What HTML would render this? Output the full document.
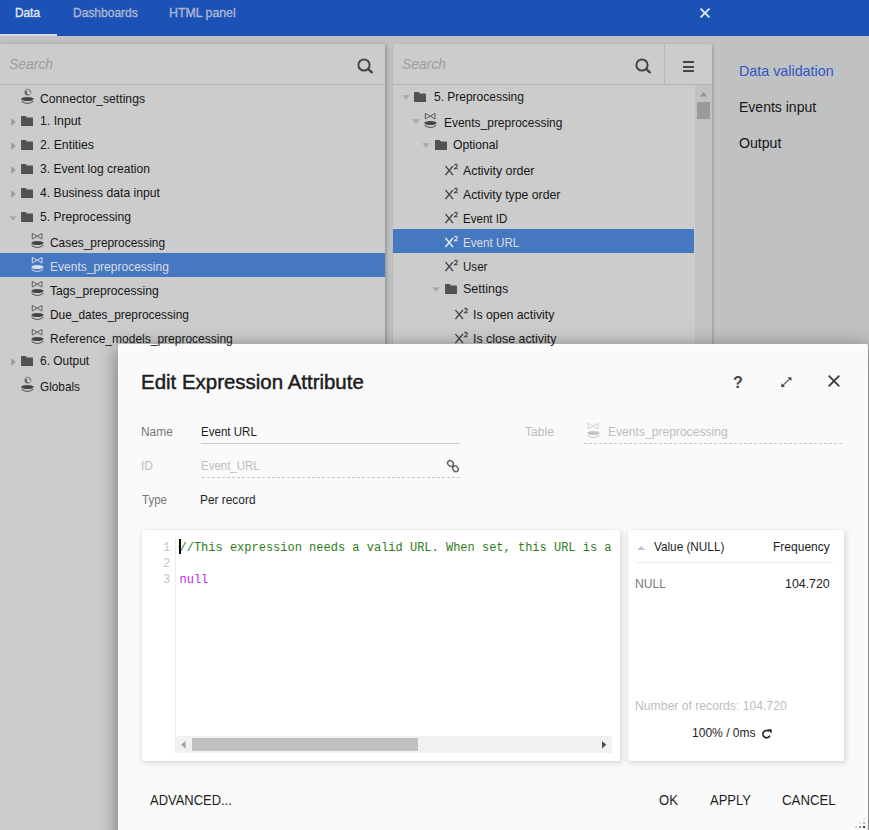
<!DOCTYPE html>
<html><head><meta charset="utf-8"><title>Edit Expression Attribute</title>
<style>
html,body{margin:0;padding:0;width:869px;height:830px;overflow:hidden;background:#c0c1c2}
#root{width:869px;height:830px;overflow:hidden;position:relative;background:#c0c1c2;font-family:'Liberation Sans', sans-serif;}
svg{overflow:visible;display:block}
</style></head>
<body>
<div id="root">
<div style="position:absolute;left:0;top:0;width:869px;height:36px;background:#1c51b6"></div>
<div style="position:absolute;left:0;top:34px;width:57px;height:2px;background:#d3d7df"></div>
<svg style="position:absolute;left:699px;top:7px;" width="12" height="12" viewBox="0 0 12 12"><path d="M1.6 1.6 L10.4 10.4 M10.4 1.6 L1.6 10.4" stroke="#dfe3ec" stroke-width="2" fill="none"/></svg>
<div style="position:absolute;left:0;top:44px;width:385px;height:786px;background:#cccccc;border-radius:2px 2px 0 0;box-shadow:1px 1px 4px rgba(0,0,0,.3)"></div>
<div style="position:absolute;left:0;top:84px;width:385px;height:1px;background:#b2b2b2"></div>
<svg style="position:absolute;left:356.2px;top:56.8px;" width="20" height="20" viewBox="0 0 20 20"><circle cx="8" cy="8" r="5.6" fill="none" stroke="#454545" stroke-width="2"/><path d="M12.3 12.1 L15.9 15.3" stroke="#454545" stroke-width="2.4" stroke-linecap="round"/></svg>
<div style="position:absolute;left:393px;top:44px;width:319px;height:786px;background:#cccccc;border-radius:2px 2px 0 0;box-shadow:1px 1px 3px rgba(0,0,0,.22)"></div>
<div style="position:absolute;left:393px;top:84px;width:319px;height:1px;background:#b2b2b2"></div>
<div style="position:absolute;left:664px;top:44px;width:1px;height:40px;background:#b6b6b6"></div>
<svg style="position:absolute;left:633.8px;top:56.7px;" width="20" height="20" viewBox="0 0 20 20"><circle cx="8" cy="8" r="5.6" fill="none" stroke="#454545" stroke-width="2"/><path d="M12.3 12.1 L15.9 15.3" stroke="#454545" stroke-width="2.4" stroke-linecap="round"/></svg>
<div style="position:absolute;left:682.5px;top:61px;width:11.5px;height:2px;background:#454545"></div>
<div style="position:absolute;left:682.5px;top:65.5px;width:11.5px;height:2px;background:#454545"></div>
<div style="position:absolute;left:682.5px;top:70px;width:11.5px;height:2px;background:#454545"></div>
<div style="position:absolute;left:695px;top:85px;width:17px;height:745px;background:#c2c2c2"></div>
<svg style="position:absolute;left:700px;top:91.5px;" width="7" height="4.5" viewBox="0 0 7 4.5"><path d="M0 4.5 L3.5 0 L7 4.5Z" fill="#929292"/></svg>
<div style="position:absolute;left:697px;top:102px;width:13px;height:17px;background:#9a9a9a"></div>
<div style="position:absolute;left:0;top:253px;width:385px;height:24px;background:#4677c1"></div>
<svg style="position:absolute;left:20.5px;top:89.2px;" width="13" height="15" viewBox="0 0 13 15"><circle cx="6.8" cy="3.2" r="3" fill="#dedede" stroke="#707070" stroke-width="0.9"/><path d="M4.3 2.2 Q5.6 1.4 6.6 2.4 L6.2 4.2 L7.6 5.9 Q5 6.6 4.1 4.4 Z" fill="#454545" opacity=".8"/><path d="M7.6 0.8 Q9.4 1.6 9.4 3.2 L8.2 2.9 Z" fill="#454545" opacity=".6"/><ellipse cx="6.4" cy="10" rx="6.2" ry="2" fill="#454545"/><path d="M0.4 12.2 Q6.4 16.6 12.4 12.2" fill="none" stroke="#454545" stroke-width="1"/></svg>
<svg style="position:absolute;left:10.8px;top:117.7px;" width="5" height="8" viewBox="0 0 5 8"><path d="M0.3 0.2 L4.6 4 L0.3 7.8Z" fill="#989898"/></svg>
<svg style="position:absolute;left:21.2px;top:116px;" width="12" height="10" viewBox="0 0 12 10"><path d="M0.6 0 H4.6 L6 1.5 H11.4 Q12 1.5 12 2.1 V9.4 Q12 10 11.4 10 H0.6 Q0 10 0 9.4 V0.6 Q0 0 0.6 0Z" fill="#525252"/></svg>
<svg style="position:absolute;left:10.8px;top:141.7px;" width="5" height="8" viewBox="0 0 5 8"><path d="M0.3 0.2 L4.6 4 L0.3 7.8Z" fill="#989898"/></svg>
<svg style="position:absolute;left:21.2px;top:140px;" width="12" height="10" viewBox="0 0 12 10"><path d="M0.6 0 H4.6 L6 1.5 H11.4 Q12 1.5 12 2.1 V9.4 Q12 10 11.4 10 H0.6 Q0 10 0 9.4 V0.6 Q0 0 0.6 0Z" fill="#525252"/></svg>
<svg style="position:absolute;left:10.8px;top:165.7px;" width="5" height="8" viewBox="0 0 5 8"><path d="M0.3 0.2 L4.6 4 L0.3 7.8Z" fill="#989898"/></svg>
<svg style="position:absolute;left:21.2px;top:164px;" width="12" height="10" viewBox="0 0 12 10"><path d="M0.6 0 H4.6 L6 1.5 H11.4 Q12 1.5 12 2.1 V9.4 Q12 10 11.4 10 H0.6 Q0 10 0 9.4 V0.6 Q0 0 0.6 0Z" fill="#525252"/></svg>
<svg style="position:absolute;left:10.8px;top:189.7px;" width="5" height="8" viewBox="0 0 5 8"><path d="M0.3 0.2 L4.6 4 L0.3 7.8Z" fill="#989898"/></svg>
<svg style="position:absolute;left:21.2px;top:188px;" width="12" height="10" viewBox="0 0 12 10"><path d="M0.6 0 H4.6 L6 1.5 H11.4 Q12 1.5 12 2.1 V9.4 Q12 10 11.4 10 H0.6 Q0 10 0 9.4 V0.6 Q0 0 0.6 0Z" fill="#525252"/></svg>
<svg style="position:absolute;left:9px;top:215.5px;" width="8" height="5" viewBox="0 0 8 5"><path d="M0.2 0.3 L7.8 0.3 L4 4.7Z" fill="#a8a8a8"/></svg>
<svg style="position:absolute;left:21.2px;top:212px;" width="12" height="10" viewBox="0 0 12 10"><path d="M0.6 0 H4.6 L6 1.5 H11.4 Q12 1.5 12 2.1 V9.4 Q12 10 11.4 10 H0.6 Q0 10 0 9.4 V0.6 Q0 0 0.6 0Z" fill="#525252"/></svg>
<svg style="position:absolute;left:30.8px;top:233.2px;" width="13" height="15" viewBox="0 0 13 15"><path d="M1.3 0.4 V6 L11 0.4 V6 Z" fill="none" stroke="#5a5a5a" stroke-width="0.95" stroke-linejoin="miter"/><ellipse cx="6.4" cy="10" rx="6.1" ry="2.1" fill="#454545"/><path d="M0.5 12.3 Q6.4 16.6 12.3 12.3" fill="none" stroke="#454545" stroke-width="1"/></svg>
<svg style="position:absolute;left:30.8px;top:257.2px;" width="13" height="15" viewBox="0 0 13 15"><path d="M1.3 0.4 V6 L11 0.4 V6 Z" fill="none" stroke="#dcdfe6" stroke-width="0.95" stroke-linejoin="miter"/><ellipse cx="6.4" cy="10" rx="6.1" ry="2.1" fill="#dcdfe6"/><path d="M0.5 12.3 Q6.4 16.6 12.3 12.3" fill="none" stroke="#dcdfe6" stroke-width="1"/></svg>
<svg style="position:absolute;left:30.8px;top:281.2px;" width="13" height="15" viewBox="0 0 13 15"><path d="M1.3 0.4 V6 L11 0.4 V6 Z" fill="none" stroke="#5a5a5a" stroke-width="0.95" stroke-linejoin="miter"/><ellipse cx="6.4" cy="10" rx="6.1" ry="2.1" fill="#454545"/><path d="M0.5 12.3 Q6.4 16.6 12.3 12.3" fill="none" stroke="#454545" stroke-width="1"/></svg>
<svg style="position:absolute;left:30.8px;top:305.2px;" width="13" height="15" viewBox="0 0 13 15"><path d="M1.3 0.4 V6 L11 0.4 V6 Z" fill="none" stroke="#5a5a5a" stroke-width="0.95" stroke-linejoin="miter"/><ellipse cx="6.4" cy="10" rx="6.1" ry="2.1" fill="#454545"/><path d="M0.5 12.3 Q6.4 16.6 12.3 12.3" fill="none" stroke="#454545" stroke-width="1"/></svg>
<svg style="position:absolute;left:30.8px;top:329.2px;" width="13" height="15" viewBox="0 0 13 15"><path d="M1.3 0.4 V6 L11 0.4 V6 Z" fill="none" stroke="#5a5a5a" stroke-width="0.95" stroke-linejoin="miter"/><ellipse cx="6.4" cy="10" rx="6.1" ry="2.1" fill="#454545"/><path d="M0.5 12.3 Q6.4 16.6 12.3 12.3" fill="none" stroke="#454545" stroke-width="1"/></svg>
<svg style="position:absolute;left:10.8px;top:357.7px;" width="5" height="8" viewBox="0 0 5 8"><path d="M0.3 0.2 L4.6 4 L0.3 7.8Z" fill="#989898"/></svg>
<svg style="position:absolute;left:21.2px;top:356px;" width="12" height="10" viewBox="0 0 12 10"><path d="M0.6 0 H4.6 L6 1.5 H11.4 Q12 1.5 12 2.1 V9.4 Q12 10 11.4 10 H0.6 Q0 10 0 9.4 V0.6 Q0 0 0.6 0Z" fill="#525252"/></svg>
<svg style="position:absolute;left:20.5px;top:377.2px;" width="13" height="15" viewBox="0 0 13 15"><circle cx="6.8" cy="3.2" r="3" fill="#dedede" stroke="#707070" stroke-width="0.9"/><path d="M4.3 2.2 Q5.6 1.4 6.6 2.4 L6.2 4.2 L7.6 5.9 Q5 6.6 4.1 4.4 Z" fill="#454545" opacity=".8"/><path d="M7.6 0.8 Q9.4 1.6 9.4 3.2 L8.2 2.9 Z" fill="#454545" opacity=".6"/><ellipse cx="6.4" cy="10" rx="6.2" ry="2" fill="#454545"/><path d="M0.4 12.2 Q6.4 16.6 12.4 12.2" fill="none" stroke="#454545" stroke-width="1"/></svg>
<div style="position:absolute;left:393px;top:229px;width:301px;height:24px;background:#4677c1"></div>
<svg style="position:absolute;left:402px;top:95px;" width="8" height="5" viewBox="0 0 8 5"><path d="M0.2 0.3 L7.8 0.3 L4 4.7Z" fill="#a8a8a8"/></svg>
<svg style="position:absolute;left:414.2px;top:92px;" width="12" height="10" viewBox="0 0 12 10"><path d="M0.6 0 H4.6 L6 1.5 H11.4 Q12 1.5 12 2.1 V9.4 Q12 10 11.4 10 H0.6 Q0 10 0 9.4 V0.6 Q0 0 0.6 0Z" fill="#525252"/></svg>
<svg style="position:absolute;left:412px;top:119px;" width="8" height="5" viewBox="0 0 8 5"><path d="M0.2 0.3 L7.8 0.3 L4 4.7Z" fill="#a8a8a8"/></svg>
<svg style="position:absolute;left:423.8px;top:113.2px;" width="13" height="15" viewBox="0 0 13 15"><path d="M1.3 0.4 V6 L11 0.4 V6 Z" fill="none" stroke="#5a5a5a" stroke-width="0.95" stroke-linejoin="miter"/><ellipse cx="6.4" cy="10" rx="6.1" ry="2.1" fill="#454545"/><path d="M0.5 12.3 Q6.4 16.6 12.3 12.3" fill="none" stroke="#454545" stroke-width="1"/></svg>
<svg style="position:absolute;left:422px;top:143px;" width="8" height="5" viewBox="0 0 8 5"><path d="M0.2 0.3 L7.8 0.3 L4 4.7Z" fill="#a8a8a8"/></svg>
<svg style="position:absolute;left:434.5px;top:140px;" width="12" height="10" viewBox="0 0 12 10"><path d="M0.6 0 H4.6 L6 1.5 H11.4 Q12 1.5 12 2.1 V9.4 Q12 10 11.4 10 H0.6 Q0 10 0 9.4 V0.6 Q0 0 0.6 0Z" fill="#525252"/></svg>
<svg style="position:absolute;left:444.8px;top:164px;" width="14" height="11" viewBox="0 0 14 11"><path d="M0.4 2 L8 11 M8 2 L0.4 11" stroke="#454545" stroke-width="1.25" fill="none"/><path d="M9.6 1.4 Q9.7 0.4 11 0.4 Q12.3 0.4 12.3 1.5 Q12.3 2.3 11.4 3.1 L9.7 4.7 H12.7" stroke="#454545" stroke-width="1.1" fill="none"/></svg>
<svg style="position:absolute;left:444.8px;top:188px;" width="14" height="11" viewBox="0 0 14 11"><path d="M0.4 2 L8 11 M8 2 L0.4 11" stroke="#454545" stroke-width="1.25" fill="none"/><path d="M9.6 1.4 Q9.7 0.4 11 0.4 Q12.3 0.4 12.3 1.5 Q12.3 2.3 11.4 3.1 L9.7 4.7 H12.7" stroke="#454545" stroke-width="1.1" fill="none"/></svg>
<svg style="position:absolute;left:444.8px;top:212px;" width="14" height="11" viewBox="0 0 14 11"><path d="M0.4 2 L8 11 M8 2 L0.4 11" stroke="#454545" stroke-width="1.25" fill="none"/><path d="M9.6 1.4 Q9.7 0.4 11 0.4 Q12.3 0.4 12.3 1.5 Q12.3 2.3 11.4 3.1 L9.7 4.7 H12.7" stroke="#454545" stroke-width="1.1" fill="none"/></svg>
<svg style="position:absolute;left:444.8px;top:236px;" width="14" height="11" viewBox="0 0 14 11"><path d="M0.4 2 L8 11 M8 2 L0.4 11" stroke="#e2e5ea" stroke-width="1.6" fill="none"/><path d="M9.6 1.4 Q9.7 0.4 11 0.4 Q12.3 0.4 12.3 1.5 Q12.3 2.3 11.4 3.1 L9.7 4.7 H12.7" stroke="#e2e5ea" stroke-width="1.1" fill="none"/></svg>
<svg style="position:absolute;left:444.8px;top:260px;" width="14" height="11" viewBox="0 0 14 11"><path d="M0.4 2 L8 11 M8 2 L0.4 11" stroke="#454545" stroke-width="1.25" fill="none"/><path d="M9.6 1.4 Q9.7 0.4 11 0.4 Q12.3 0.4 12.3 1.5 Q12.3 2.3 11.4 3.1 L9.7 4.7 H12.7" stroke="#454545" stroke-width="1.1" fill="none"/></svg>
<svg style="position:absolute;left:432px;top:287px;" width="8" height="5" viewBox="0 0 8 5"><path d="M0.2 0.3 L7.8 0.3 L4 4.7Z" fill="#a8a8a8"/></svg>
<svg style="position:absolute;left:444.5px;top:284px;" width="12" height="10" viewBox="0 0 12 10"><path d="M0.6 0 H4.6 L6 1.5 H11.4 Q12 1.5 12 2.1 V9.4 Q12 10 11.4 10 H0.6 Q0 10 0 9.4 V0.6 Q0 0 0.6 0Z" fill="#525252"/></svg>
<svg style="position:absolute;left:455px;top:308px;" width="14" height="11" viewBox="0 0 14 11"><path d="M0.4 2 L8 11 M8 2 L0.4 11" stroke="#454545" stroke-width="1.25" fill="none"/><path d="M9.6 1.4 Q9.7 0.4 11 0.4 Q12.3 0.4 12.3 1.5 Q12.3 2.3 11.4 3.1 L9.7 4.7 H12.7" stroke="#454545" stroke-width="1.1" fill="none"/></svg>
<svg style="position:absolute;left:455px;top:332px;" width="14" height="11" viewBox="0 0 14 11"><path d="M0.4 2 L8 11 M8 2 L0.4 11" stroke="#454545" stroke-width="1.25" fill="none"/><path d="M9.6 1.4 Q9.7 0.4 11 0.4 Q12.3 0.4 12.3 1.5 Q12.3 2.3 11.4 3.1 L9.7 4.7 H12.7" stroke="#454545" stroke-width="1.1" fill="none"/></svg>
<div style="position:absolute;left:867.9px;top:346px;width:2px;height:830px;background:#b0b0b0"></div>
<div style="position:absolute;left:118px;top:344px;width:749.9px;border-top:1px solid #fff;box-sizing:border-box;height:526px;background:#fafafa;border-radius:2px;box-shadow:0 4px 20px rgba(0,0,0,.46)"></div>
<svg style="position:absolute;left:780.5px;top:376.8px;" width="11" height="11" viewBox="0 0 11 11"><path d="M1.6 8.8 L9.2 1.2" stroke="#4a4a4a" stroke-width="1.05" fill="none"/><path d="M6.7 0.3 H10.4 V4 Z M0.3 6.2 V9.9 H4 Z" fill="#3d3d3d"/></svg>
<svg style="position:absolute;left:828px;top:375.4px;" width="12" height="12" viewBox="0 0 12 12"><path d="M0.7 0.7 L11.3 11.3 M11.3 0.7 L0.7 11.3" stroke="#3f3f3f" stroke-width="1.9" fill="none"/></svg>
<div style="position:absolute;left:201px;top:443px;width:259px;height:1px;background:#cfcfcf"></div>
<div style="position:absolute;left:202px;top:477px;width:258px;height:1px;background:repeating-linear-gradient(90deg,#c6c6c6 0 3px,transparent 3px 5px)"></div>
<svg style="position:absolute;left:445px;top:458px;" width="16" height="16" viewBox="0 0 16 16"><g fill="none" stroke="#5a5a5a" stroke-width="1.35"><ellipse cx="5.45" cy="5.45" rx="3.15" ry="2.5" transform="rotate(47 5.45 5.45)"/><ellipse cx="10.5" cy="10.8" rx="3.1" ry="2.5" transform="rotate(47 10.5 10.8)"/></g></svg>
<svg style="position:absolute;left:587px;top:423.3px;" width="13" height="15" viewBox="0 0 13 15"><path d="M1.3 0.4 V6 L11 0.4 V6 Z" fill="none" stroke="#cfcfcf" stroke-width="0.95" stroke-linejoin="miter"/><ellipse cx="6.4" cy="10" rx="6.1" ry="2.1" fill="#c4c4c4"/><path d="M0.5 12.3 Q6.4 16.6 12.3 12.3" fill="none" stroke="#c4c4c4" stroke-width="1"/></svg>
<div style="position:absolute;left:584px;top:443px;width:259px;height:1px;background:repeating-linear-gradient(90deg,#c6c6c6 0 3px,transparent 3px 5px)"></div>
<div style="position:absolute;left:142px;top:530px;width:478px;height:231px;background:#fff;border-radius:2px;box-shadow:1.5px 2px 6px rgba(0,0,0,.14),0 0 1.5px rgba(0,0,0,.10)"></div>
<div style="position:absolute;left:175px;top:538px;width:1px;height:199px;background:#ececec"></div>
<div style="position:absolute;left:179px;top:538.5px;width:2px;height:15.5px;background:#000"></div>
<div style="position:absolute;left:175px;top:736px;width:437px;height:17px;background:#f1f1f1"></div>
<div style="position:absolute;left:192px;top:738px;width:226px;height:13px;background:#c1c1c1"></div>
<svg style="position:absolute;left:180.5px;top:741px;" width="5" height="7.5" viewBox="0 0 5 7.5"><path d="M4.6 0 V7.5 L0 3.75Z" fill="#a3a3a3"/></svg>
<svg style="position:absolute;left:602px;top:740.6px;" width="5" height="7.5" viewBox="0 0 5 7.5"><path d="M0 0 V7.4 L4.3 3.7Z" fill="#505050"/></svg>
<div style="position:absolute;left:628px;top:530px;width:216px;height:231px;background:#fff;border-radius:2px;box-shadow:1.5px 2px 6px rgba(0,0,0,.14),0 0 1.5px rgba(0,0,0,.10)"></div>
<svg style="position:absolute;left:636.8px;top:546px;" width="8.4" height="4" viewBox="0 0 8.4 4"><path d="M0 4 L4.2 0 L8.4 4Z" fill="#c4c4c4"/></svg>
<div style="position:absolute;left:636px;top:562px;width:198px;height:1px;background:#ececec"></div>
<svg style="position:absolute;left:760.5px;top:727.5px;" width="12" height="12" viewBox="0 0 12 12"><path d="M7.98 3.27 A3.7 3.7 0 1 0 8.95 7.66" fill="none" stroke="#222" stroke-width="1.6"/><path d="M6.9 1.3 H10.6 V5.7 Z" fill="#222"/></svg>
<div style="position:absolute;left:863px;top:826px;width:2.4px;height:2.4px;border-radius:50%;background:rgba(0,0,0,1)"></div><div style="position:absolute;left:859px;top:826px;width:2.4px;height:2.4px;border-radius:50%;background:rgba(0,0,0,0.55)"></div><div style="position:absolute;left:855px;top:826px;width:2.4px;height:2.4px;border-radius:50%;background:rgba(0,0,0,0.18)"></div><div style="position:absolute;left:863px;top:822px;width:2.4px;height:2.4px;border-radius:50%;background:rgba(0,0,0,0.35)"></div><div style="position:absolute;left:859px;top:822px;width:2.4px;height:2.4px;border-radius:50%;background:rgba(0,0,0,0.15)"></div><div style="position:absolute;left:863px;top:818px;width:2.4px;height:2.4px;border-radius:50%;background:rgba(0,0,0,0.12)"></div>
<span style="position:absolute;left:8.76px;top:53.80px;font:italic normal 15px/20px 'Liberation Sans', sans-serif;color:#9d9d9d;white-space:pre;transform-origin:0 50%;transform:scaleX(0.9277);">Search</span>
<span style="position:absolute;left:401.76px;top:53.80px;font:italic normal 15px/20px 'Liberation Sans', sans-serif;color:#9d9d9d;white-space:pre;transform-origin:0 50%;transform:scaleX(0.9277);">Search</span>
<span style="position:absolute;left:15.20px;top:4.00px;font:normal normal 13px/17px 'Liberation Sans', sans-serif;color:#e4e7ee;white-space:pre;transform-origin:0 50%;-webkit-text-stroke:0.35px #e4e7ee;transform:scaleX(0.9101);">Data</span>
<span style="position:absolute;left:73.20px;top:4.00px;font:normal normal 13px/17px 'Liberation Sans', sans-serif;color:#adb9d4;white-space:pre;transform-origin:0 50%;-webkit-text-stroke:0.35px #adb9d4;transform:scaleX(0.9244);">Dashboards</span>
<span style="position:absolute;left:169.20px;top:4.00px;font:normal normal 13px/17px 'Liberation Sans', sans-serif;color:#adb9d4;white-space:pre;transform-origin:0 50%;-webkit-text-stroke:0.35px #adb9d4;transform:scaleX(0.9488);">HTML panel</span>
<span style="position:absolute;left:739.08px;top:60.80px;font:normal normal 15px/20px 'Liberation Sans', sans-serif;color:#3056c3;white-space:pre;transform-origin:0 50%;transform:scaleX(0.9536);">Data validation</span>
<span style="position:absolute;left:739.08px;top:96.80px;font:normal normal 15px/20px 'Liberation Sans', sans-serif;color:#161616;white-space:pre;transform-origin:0 50%;transform:scaleX(0.9341);">Events input</span>
<span style="position:absolute;left:739.20px;top:132.80px;font:normal normal 15px/20px 'Liberation Sans', sans-serif;color:#161616;white-space:pre;transform-origin:0 50%;transform:scaleX(0.9410);">Output</span>
<span style="position:absolute;left:40.00px;top:90.00px;font:normal normal 13px/17px 'Liberation Sans', sans-serif;color:#161616;white-space:pre;transform-origin:0 50%;transform:scaleX(0.9374);">Connector_settings</span>
<span style="position:absolute;left:40.00px;top:112.00px;font:normal normal 13px/17px 'Liberation Sans', sans-serif;color:#161616;white-space:pre;transform-origin:0 50%;transform:scaleX(0.9452);">1. Input</span>
<span style="position:absolute;left:40.00px;top:136.00px;font:normal normal 13px/17px 'Liberation Sans', sans-serif;color:#161616;white-space:pre;transform-origin:0 50%;transform:scaleX(0.9458);">2. Entities</span>
<span style="position:absolute;left:40.00px;top:160.00px;font:normal normal 13px/17px 'Liberation Sans', sans-serif;color:#161616;white-space:pre;transform-origin:0 50%;transform:scaleX(0.9272);">3. Event log creation</span>
<span style="position:absolute;left:40.00px;top:184.00px;font:normal normal 13px/17px 'Liberation Sans', sans-serif;color:#161616;white-space:pre;transform-origin:0 50%;transform:scaleX(0.9381);">4. Business data input</span>
<span style="position:absolute;left:40.00px;top:208.00px;font:normal normal 13px/17px 'Liberation Sans', sans-serif;color:#161616;white-space:pre;transform-origin:0 50%;transform:scaleX(0.9318);">5. Preprocessing</span>
<span style="position:absolute;left:50.00px;top:234.00px;font:normal normal 13px/17px 'Liberation Sans', sans-serif;color:#161616;white-space:pre;transform-origin:0 50%;transform:scaleX(0.9146);">Cases_preprocessing</span>
<span style="position:absolute;left:50.00px;top:258.00px;font:normal normal 13px/17px 'Liberation Sans', sans-serif;color:#dadde4;white-space:pre;transform-origin:0 50%;transform:scaleX(0.9243);">Events_preprocessing</span>
<span style="position:absolute;left:50.00px;top:282.00px;font:normal normal 13px/17px 'Liberation Sans', sans-serif;color:#161616;white-space:pre;transform-origin:0 50%;transform:scaleX(0.9351);">Tags_preprocessing</span>
<span style="position:absolute;left:50.00px;top:306.00px;font:normal normal 13px/17px 'Liberation Sans', sans-serif;color:#161616;white-space:pre;transform-origin:0 50%;transform:scaleX(0.9152);">Due_dates_preprocessing</span>
<span style="position:absolute;left:50.00px;top:330.00px;font:normal normal 13px/17px 'Liberation Sans', sans-serif;color:#161616;white-space:pre;transform-origin:0 50%;transform:scaleX(0.9232);">Reference_models_preprocessing</span>
<span style="position:absolute;left:40.00px;top:352.00px;font:normal normal 13px/17px 'Liberation Sans', sans-serif;color:#161616;white-space:pre;transform-origin:0 50%;transform:scaleX(0.9182);">6. Output</span>
<span style="position:absolute;left:40.00px;top:378.00px;font:normal normal 13px/17px 'Liberation Sans', sans-serif;color:#161616;white-space:pre;transform-origin:0 50%;transform:scaleX(0.9075);">Globals</span>
<span style="position:absolute;left:433.80px;top:88.00px;font:normal normal 13px/17px 'Liberation Sans', sans-serif;color:#161616;white-space:pre;transform-origin:0 50%;transform:scaleX(0.9215);">5. Preprocessing</span>
<span style="position:absolute;left:443.50px;top:114.00px;font:normal normal 13px/17px 'Liberation Sans', sans-serif;color:#161616;white-space:pre;transform-origin:0 50%;transform:scaleX(0.9204);">Events_preprocessing</span>
<span style="position:absolute;left:453.40px;top:136.00px;font:normal normal 13px/17px 'Liberation Sans', sans-serif;color:#161616;white-space:pre;transform-origin:0 50%;transform:scaleX(0.9358);">Optional</span>
<span style="position:absolute;left:463.40px;top:162.00px;font:normal normal 13px/17px 'Liberation Sans', sans-serif;color:#161616;white-space:pre;transform-origin:0 50%;transform:scaleX(0.9503);">Activity order</span>
<span style="position:absolute;left:463.40px;top:186.00px;font:normal normal 13px/17px 'Liberation Sans', sans-serif;color:#161616;white-space:pre;transform-origin:0 50%;transform:scaleX(0.9427);">Activity type order</span>
<span style="position:absolute;left:463.40px;top:210.00px;font:normal normal 13px/17px 'Liberation Sans', sans-serif;color:#161616;white-space:pre;transform-origin:0 50%;transform:scaleX(0.8888);">Event ID</span>
<span style="position:absolute;left:463.40px;top:234.00px;font:normal normal 13px/17px 'Liberation Sans', sans-serif;color:#dadde4;white-space:pre;transform-origin:0 50%;transform:scaleX(0.8956);">Event URL</span>
<span style="position:absolute;left:463.40px;top:258.00px;font:normal normal 13px/17px 'Liberation Sans', sans-serif;color:#161616;white-space:pre;transform-origin:0 50%;transform:scaleX(0.8893);">User</span>
<span style="position:absolute;left:463.40px;top:280.00px;font:normal normal 13px/17px 'Liberation Sans', sans-serif;color:#161616;white-space:pre;transform-origin:0 50%;transform:scaleX(0.9625);">Settings</span>
<span style="position:absolute;left:473.20px;top:306.00px;font:normal normal 13px/17px 'Liberation Sans', sans-serif;color:#161616;white-space:pre;transform-origin:0 50%;transform:scaleX(0.9465);">Is open activity</span>
<span style="position:absolute;left:473.20px;top:330.00px;font:normal normal 13px/17px 'Liberation Sans', sans-serif;color:#161616;white-space:pre;transform-origin:0 50%;transform:scaleX(0.9540);">Is close activity</span>
<span style="position:absolute;left:141.20px;top:369.07px;font:normal normal 20px/26px 'Liberation Sans', sans-serif;color:#1c1c1c;white-space:pre;transform-origin:0 50%;-webkit-text-stroke:0.45px #1c1c1c;transform:scaleX(1.0225);">Edit Expression Attribute</span>
<span style="position:absolute;left:733.20px;top:371.96px;font:normal bold 16px/21px 'Liberation Sans', sans-serif;color:#484848;white-space:pre;transform-origin:0 50%;transform:scaleX(1.0179);">?</span>
<span style="position:absolute;left:141.30px;top:423.00px;font:normal normal 13px/17px 'Liberation Sans', sans-serif;color:#777;white-space:pre;transform-origin:0 50%;transform:scaleX(0.9174);">Name</span>
<span style="position:absolute;left:201.20px;top:423.00px;font:normal normal 13px/17px 'Liberation Sans', sans-serif;color:#1e1e1e;white-space:pre;transform-origin:0 50%;transform:scaleX(0.8877);">Event URL</span>
<span style="position:absolute;left:141.30px;top:457.00px;font:normal normal 13px/17px 'Liberation Sans', sans-serif;color:#bdbdbd;white-space:pre;transform-origin:0 50%;transform:scaleX(0.9154);">ID</span>
<span style="position:absolute;left:201.20px;top:457.00px;font:normal normal 13px/17px 'Liberation Sans', sans-serif;color:#bdbdbd;white-space:pre;transform-origin:0 50%;transform:scaleX(0.8834);">Event_URL</span>
<span style="position:absolute;left:142.10px;top:490.50px;font:normal normal 13px/17px 'Liberation Sans', sans-serif;color:#777;white-space:pre;transform-origin:0 50%;transform:scaleX(0.8869);">Type</span>
<span style="position:absolute;left:200.42px;top:490.50px;font:normal normal 13px/17px 'Liberation Sans', sans-serif;color:#1e1e1e;white-space:pre;transform-origin:0 50%;transform:scaleX(0.9144);">Per record</span>
<span style="position:absolute;left:525.10px;top:423.00px;font:normal normal 13px/17px 'Liberation Sans', sans-serif;color:#bdbdbd;white-space:pre;transform-origin:0 50%;transform:scaleX(0.9304);">Table</span>
<span style="position:absolute;left:608.20px;top:423.00px;font:normal normal 13px/17px 'Liberation Sans', sans-serif;color:#bdbdbd;white-space:pre;transform-origin:0 50%;transform:scaleX(0.9299);">Events_preprocessing</span>
<span style="position:absolute;left:163.00px;top:539.80px;font:normal normal 12px/16px 'Liberation Mono', monospace;color:#c6c6c6;white-space:pre;transform-origin:0 50%;">1</span>
<span style="position:absolute;left:163.00px;top:555.80px;font:normal normal 12px/16px 'Liberation Mono', monospace;color:#c6c6c6;white-space:pre;transform-origin:0 50%;">2</span>
<span style="position:absolute;left:163.00px;top:571.80px;font:normal normal 12px/16px 'Liberation Mono', monospace;color:#c6c6c6;white-space:pre;transform-origin:0 50%;">3</span>
<span style="position:absolute;left:179.50px;top:539.80px;font:normal normal 12px/16px 'Liberation Mono', monospace;color:#2f7d1a;white-space:pre;transform-origin:0 50%;">//This expression needs a valid URL. When set, this URL is a</span>
<span style="position:absolute;left:179.50px;top:571.80px;font:normal normal 12px/16px 'Liberation Mono', monospace;color:#bc2ae2;white-space:pre;transform-origin:0 50%;">null</span>
<span style="position:absolute;left:653.56px;top:538.00px;font:normal normal 13px/17px 'Liberation Sans', sans-serif;color:#1e1e1e;white-space:pre;transform-origin:0 50%;transform:scaleX(0.9042);">Value (NULL)</span>
<span style="position:absolute;left:773.20px;top:538.00px;font:normal normal 13px/17px 'Liberation Sans', sans-serif;color:#1e1e1e;white-space:pre;transform-origin:0 50%;transform:scaleX(0.9250);">Frequency</span>
<span style="position:absolute;left:635.20px;top:575.00px;font:normal normal 13px/17px 'Liberation Sans', sans-serif;color:#7a7a7a;white-space:pre;transform-origin:0 50%;transform:scaleX(0.9311);">NULL</span>
<span style="position:absolute;left:785.30px;top:575.00px;font:normal normal 13px/17px 'Liberation Sans', sans-serif;color:#1e1e1e;white-space:pre;transform-origin:0 50%;transform:scaleX(0.9520);">104.720</span>
<span style="position:absolute;left:635.20px;top:697.00px;font:normal normal 13px/17px 'Liberation Sans', sans-serif;color:#bdbdbd;white-space:pre;transform-origin:0 50%;transform:scaleX(0.9372);">Number of records: 104.720</span>
<span style="position:absolute;left:692.42px;top:724.00px;font:normal normal 13px/17px 'Liberation Sans', sans-serif;color:#1e1e1e;white-space:pre;transform-origin:0 50%;transform:scaleX(0.9264);">100% / 0ms</span>
<span style="position:absolute;left:150.10px;top:791.15px;font:normal normal 14px/18px 'Liberation Sans', sans-serif;color:#1e1e1e;white-space:pre;transform-origin:0 50%;transform:scaleX(0.9250);">ADVANCED...</span>
<span style="position:absolute;left:659.10px;top:791.15px;font:normal normal 14px/18px 'Liberation Sans', sans-serif;color:#1e1e1e;white-space:pre;transform-origin:0 50%;transform:scaleX(0.9351);">OK</span>
<span style="position:absolute;left:710.00px;top:791.15px;font:normal normal 14px/18px 'Liberation Sans', sans-serif;color:#1e1e1e;white-space:pre;transform-origin:0 50%;transform:scaleX(0.9295);">APPLY</span>
<span style="position:absolute;left:782.30px;top:791.15px;font:normal normal 14px/18px 'Liberation Sans', sans-serif;color:#1e1e1e;white-space:pre;transform-origin:0 50%;transform:scaleX(0.9461);">CANCEL</span>
</div>
</body></html>
